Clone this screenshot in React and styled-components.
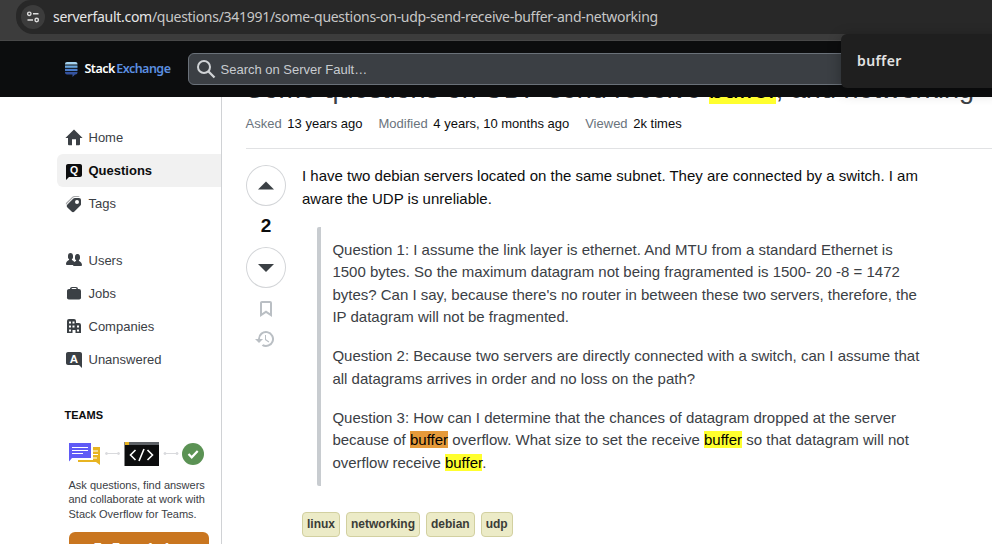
import React from "react";
import styled, { createGlobalStyle } from "styled-components";

const Global = createGlobalStyle`
  * { box-sizing: border-box; }
  html, body { margin: 0; background: #fff; overflow: hidden; }
  body { font-family: "Liberation Sans", Arial, sans-serif; font-size: 13px; color: #0c0d0e; }
  p, h1 { margin: 0; }
`;

const Page = styled.div`
  position: relative;
  width: 992px;
  height: 544px;
  overflow: hidden;
  display: flex;
  flex-direction: column;
`;

const BrowserBar = styled.div`
  flex: none;
  height: 41px;
  padding-left: 16px;
  background: #3c3c3c;
  border-bottom: 1px solid #484848;
  position: relative;
  z-index: 2;
`;

const AddressField = styled.div`
  height: 34px;
  background: #282828;
  border-radius: 15px 0 0 17px;
  display: flex;
  align-items: center;
  padding-left: 5px;
`;

const SiteInfo = styled.div`
  width: 24px;
  height: 24px;
  border-radius: 50%;
  background: #3c3c3c;
  display: grid;
  place-items: center;
`;

const Url = styled.div`
  margin-left: 8px;
  font: 14px/20px "Noto Sans", sans-serif;
  letter-spacing: -0.285px;
  color: #c7c7c7;
  white-space: nowrap;
  span { color: #e6e6e6; }
`;

const TopBar = styled.header`
  flex: none;
  height: 56px;
  background: #0c0d0e;
  display: flex;
  align-items: center;
  padding-left: 65px;
  position: relative;
  z-index: 1;
`;

const Logo = styled.div`
  width: 123px;
  display: flex;
  align-items: center;
  gap: 7px;
`;

const LogoText = styled.div`
  font: 600 12.5px/16px "Noto Sans", sans-serif;
  letter-spacing: -0.53px;
  color: #fff;
  white-space: nowrap;
  margin: -1px 0 0 -0.5px;
  span { color: #5b8fe0; margin-left: 1.5px; }
`;

const Search = styled.div`
  flex: 1;
  height: 32px;
  margin-right: -10px;
  background: #3b3f44;
  border: 1px solid #6a7179;
  border-radius: 6px;
  display: flex;
  align-items: center;
  padding-left: 7px;
  gap: 4.5px;
  color: #c8ccd0;
`;

const FindBar = styled.div`
  position: absolute;
  z-index: 3;
  left: 841px;
  top: 34px;
  width: 160px;
  height: 54px;
  padding-left: 16px;
  border-radius: 6px;
  background: #1f1f1f;
  box-shadow: 0 3px 14px rgba(0, 0, 0, 0.3);
  color: #e3e3e3;
  font: 600 14px/54px "Noto Sans", sans-serif;
  letter-spacing: 0.4px;
`;

const Columns = styled.div`
  flex: 1;
  min-height: 0;
  display: flex;
`;

const Sidebar = styled.nav`
  flex: none;
  width: 222px;
  padding: 24px 0 0 57px;
  border-right: 1px solid #d0d2d5;
`;

const NavItem = styled.div`
  height: 33px;
  padding-left: 8px;
  margin-top: ${(p) => (p.$spaced ? "24px" : "0")};
  display: flex;
  align-items: center;
  gap: 5.5px;
  border-radius: 6px 0 0 6px;
  background: ${(p) => (p.$active ? "#f1f1f1" : "transparent")};
  color: ${(p) => (p.$active ? "#0c0d0e" : "#3b4045")};
  font-weight: ${(p) => (p.$active ? 700 : 400)};
`;

const TeamsTitle = styled.div`
  margin: 32px 0 0 7.5px;
  font: 700 11px/14px "Liberation Sans", sans-serif;
`;

const TeamsArt = styled.svg`
  display: block;
  margin: 20px 0 0 12px;
`;

const TeamsText = styled.div`
  margin: 11px 0 0 11.5px;
  width: 145px;
  font-size: 11px;
  line-height: 14.4px;
  color: #3b4045;
`;

const TeamsButton = styled.div`
  margin: 11px 0 0 12px;
  width: 140px;
  height: 34px;
  border-radius: 6px;
  background: #c97620;
  color: #fff;
  text-align: center;
  font: 700 11px/31px "Liberation Sans", sans-serif;
  letter-spacing: -0.3px;
`;

const Main = styled.main`
  flex: 1;
  min-width: 0;
  padding-left: 24px;
`;

const Title = styled.h1`
  margin: -26px 0 0 -0.5px;
  height: 36px;
  font-size: 27px;
  line-height: 36px;
  font-weight: 400;
  color: #3b4045;
  white-space: nowrap;
`;

const Meta = styled.div`
  display: flex;
  gap: 16px;
  height: 42px;
  padding-top: 8px;
  line-height: 17px;
  border-bottom: 1px solid #e1e2e4;
  div:first-child { margin-left: -0.5px; }
  span { color: #6a737c; margin-right: 5.7px; }
`;

const Post = styled.div`
  display: flex;
  padding-top: 16px;
`;

const Votes = styled.div`
  flex: none;
  width: 40px;
  display: flex;
  flex-direction: column;
  align-items: center;
`;

const VoteButton = styled.div`
  width: 40px;
  height: 41px;
  border: 1px solid #d3d5d8;
  border-radius: 50%;
  display: grid;
  place-items: center;
`;

const Score = styled.div`
  height: 41px;
  font: 700 19px/39px "Liberation Sans", sans-serif;
`;

const VoteIcon = styled.div`
  display: flex;
  height: 30px;
  align-items: center;
  margin-top: ${(p) => p.$top || 0}px;
  margin-left: ${(p) => p.$left || 0}px;
`;

const Body = styled.article`
  margin-left: 16px;
  width: 632px;
  font-size: 15px;
  line-height: 22.5px;
`;

const Quote = styled.blockquote`
  margin: 16.5px 0 0 15px;
  padding: 12.2px 0 11.8px 11.4px;
  border-left: 4px solid #c8ccd0;
  border-radius: 2px;
  color: #3b4045;
  white-space: nowrap;
  p + p { margin-top: 16.5px; }
`;

const Mark = styled.mark`
  background: ${(p) => (p.$current ? "#e59a3a" : "#ffff2e")};
  color: #000;
`;

const Tags = styled.div`
  margin-top: 26px;
  display: flex;
  gap: 6px;
`;

const Tag = styled.div`
  height: 25px;
  padding: 0 4px;
  border: 1px solid #d2d0a0;
  border-radius: 4px;
  background: #ecebc7;
  color: #3b3d38;
  font: 700 12px/23px "Liberation Sans", sans-serif;
`;

const icons = {
  home: <path d="M15 9v6.200a1 1 0 0 1-1 1h-3v-6H7v6H4a1 1 0 0 1-1-1V9H.400L9 .400 17.600 9z" />,
  question: (
    <>
      <path d="m4 15-3 3V4c0-1.1.9-2 2-2h12c1.1 0 2 .9 2 2v9c0 1.1-.9 2-2 2z" />
      <text x="9" y="12" textAnchor="middle" fill="#fff" fontFamily="Liberation Sans" fontWeight="700" fontSize="10.5">Q</text>
    </>
  ),
  tags: (
    <>
      <path d="M9.24 1a3 3 0 0 0-2.12.88l-5.7 5.7a2 2 0 0 0-.38 2.31 3 3 0 0 1 .67-1.01l6-6A3 3 0 0 1 9.83 2H14a3 3 0 0 1 .79.1A2 2 0 0 0 13 1z" opacity=".45" />
      <path fillRule="evenodd" d="M9.83 3a2 2 0 0 0-1.42.59l-6 6a2 2 0 0 0 0 2.82L6.6 16.6a2 2 0 0 0 2.82 0l6-6A2 2 0 0 0 16 9.17V5a2 2 0 0 0-2-2zM12 9a2 2 0 1 1 0-4 2 2 0 0 1 0 4" />
    </>
  ),
  users: <path d="M17 14c0 .44-.45 1-1 1H9a1 1 0 0 1-1-1H2c-.54 0-1-.56-1-1 0-2.63 3-4 3-4s.23-.4 0-1c-.84-.62-1.06-.59-1-3s1.37-3 2.5-3 2.44.58 2.5 3-.16 2.38-1 3c-.23.59 0 1 0 1s1.55.71 2.42 2.09c.78-.72 1.58-1.1 1.58-1.1s.23-.4 0-1c-.84-.61-1.06-.58-1-3s1.37-3 2.5-3 2.44.59 2.5 3c.05 2.42-.16 2.39-1 3-.23.6 0 1 0 1s3 1.38 3 4" transform="translate(0 -1)" />,
  jobs: <path fillRule="evenodd" d="M5 4c0-1.1.9-2 2-2h4a2 2 0 0 1 2 2h1a2 2 0 0 1 2 2v6a2 2 0 0 1-2 2.600H4A2 2 0 0 1 2 12V6c0-1.1.9-2 2-2zm1.5 0h5a1 1 0 0 0-1-1h-3a1 1 0 0 0-1 1" />,
  companies: <path fillRule="evenodd" d="M4 1h5a2 2 0 0 1 2 2v2h3a2 2 0 0 1 2 2v8h-5.500v-3h-3v3H2V3a2 2 0 0 1 2-2m0 2.500v2h2v-2zm3.500 0v2h2v-2zM4 7.500v2h2v-2zm3.500 0v2h2v-2zm4.500 0v2h2v-2zM4 11.500v2h2v-2zm8 0v2h2v-2z" />,
  answer: (
    <>
      <path d="M14 15H3c-1.1 0-2-.9-2-2V4c0-1.1.9-2 2-2h12c1.1 0 2 .9 2 2v14z" transform="translate(0 -1)" />
      <text x="9" y="11.5" textAnchor="middle" fill="#fff" fontFamily="Liberation Sans" fontWeight="700" fontSize="11.5">A</text>
    </>
  ),
  bookmark: <path fillRule="evenodd" d="m9 10.6 4 2.660V3H5v10.260zM3 17V3c0-1.1.9-2 2-2h8a2 2 0 0 1 2 2v14l-6-4z" />,
  history: <path d="M3 9a8 8 0 1 1 3.73 6.77L8.2 14.3A6 6 0 1 0 5 9l3.01-.01-4 4-4-4zm7-4h1.01L11 9.36l3.22 2.1-.6.93L10 10z" />,
};

function Icon({ name, width = 18, color = "currentColor" }) {
  return (
    <svg width={width} height="18" viewBox={`0 0 ${width} 18`} fill={color}>
      {icons[name]}
    </svg>
  );
}

const nav = [
  { icon: "home", label: "Home" },
  { icon: "question", label: "Questions", active: true },
  { icon: "tags", label: "Tags" },
  { icon: "users", label: "Users", spaced: true },
  { icon: "jobs", label: "Jobs" },
  { icon: "companies", label: "Companies" },
  { icon: "answer", label: "Unanswered" },
];

export default function App() {
  return (
    <Page>
      <Global />
      <BrowserBar>
        <AddressField>
          <SiteInfo>
            <svg width="14" height="14" viewBox="0 0 14 14" fill="none" stroke="#dedede" strokeWidth="1.4">
              <circle cx="3.3" cy="3.8" r="1.7" />
              <path d="M7 3.800h5.500M1.500 10h5.500" />
              <circle cx="10.7" cy="10" r="1.7" />
            </svg>
          </SiteInfo>
          <Url>
            <span>serverfault.com</span>/questions/341991/some-questions-on-udp-send-receive-buffer-and-networking
          </Url>
        </AddressField>
      </BrowserBar>
      <TopBar>
        <Logo>
          <svg width="13" height="15" viewBox="0 0 13 15">
            <path d="M0 2.500V2a2 2 0 0 1 2-2h8.500a2 2 0 0 1 2 2v.500z" fill="#a5d3f0" />
            <path d="M0 3.500h12.500v2.300H0z" fill="#6aa6dc" />
            <path d="M0 6.800h12.500v2.300H0z" fill="#4a7bc8" />
            <path d="M0 10h12.500v.500a2 2 0 0 1-2 2H10L7.500 15v-2.500H2a2 2 0 0 1-2-2z" fill="#35539f" />
          </svg>
          <LogoText>Stack<span>Exchange</span></LogoText>
        </Logo>
        <Search>
          <svg width="20" height="20" viewBox="0 0 20 20" fill="none" stroke="#d0d3d6" strokeWidth="2">
            <circle cx="8" cy="8" r="6" />
            <path d="m12.500 12.500 6 6" strokeWidth="2.300" />
          </svg>
          Search on Server Fault…
        </Search>
      </TopBar>
      <FindBar>buffer</FindBar>
      <Columns>
        <Sidebar>
          {nav.map((n) => (
            <NavItem key={n.label} $active={n.active} $spaced={n.spaced}>
              <Icon name={n.icon} />
              {n.label}
            </NavItem>
          ))}
          <TeamsTitle>TEAMS</TeamsTitle>
          <TeamsArt width="136" height="25" viewBox="0 0 136 25">
            <path d="M24 5h7v18l-4-3H9v-2h15z" fill="#e8b421" />
            <path d="M23 9h6M23 12.500h6M23 16h5" stroke="#fff" strokeWidth="1.200" />
            <path d="M0 1h22v15H3l-3 3.500z" fill="#5f5af6" />
            <path d="M3 5.500h16M3 8.500h16M3 11.500h11" stroke="#fff" strokeWidth="1" />
            <g stroke="#d9dadd" fill="#d9dadd">
              <path d="M37 11.500h12M96 11.500h12" />
              <circle cx="37.5" cy="11.5" r="1" /><circle cx="49.5" cy="11.5" r="1" />
              <circle cx="96" cy="11.5" r="1" /><circle cx="108" cy="11.5" r="1" />
            </g>
            <path d="M55.500 0H90v24H55.500z" fill="#0c0d0e" />
            <path d="M60 0h30v3H60z" fill="#5e6267" />
            <path d="M56 0h4v3h-4z" fill="#e8b421" />
            <path d="m66.500 8-5 5 5 5M78.500 8l5 5-5 5M75 7l-5 12" fill="none" stroke="#fff" strokeWidth="1.600" />
            <circle cx="124" cy="12" r="11" fill="#5b9254" />
            <path d="m119.500 12 3.200 3.300 6-6.300" fill="none" stroke="#fff" strokeWidth="2.200" />
          </TeamsArt>
          <TeamsText>Ask questions, find answers and collaborate at work with Stack Overflow for Teams.</TeamsText>
          <TeamsButton>Try Teams for free</TeamsButton>
        </Sidebar>
        <Main>
          <Title>
            Some questions on UDP send receive <Mark>buffer</Mark>, and networking
          </Title>
          <Meta>
            <div><span>Asked</span>13 years ago</div>
            <div><span>Modified</span>4 years, 10 months ago</div>
            <div><span>Viewed</span>2k times</div>
          </Meta>
          <Post>
            <Votes>
              <VoteButton>
                <svg width="18" height="18" viewBox="0 0 18 18" fill="#3b4045"><path d="M1 12.500h16L9 4.500z" /></svg>
              </VoteButton>
              <Score>2</Score>
              <VoteButton>
                <svg width="18" height="18" viewBox="0 0 18 18" fill="#3b4045"><path d="M1 5h16l-8 8z" /></svg>
              </VoteButton>
              <VoteIcon $top={6}><Icon name="bookmark" color="#babfc4" /></VoteIcon>
              <VoteIcon $left={-3}><Icon name="history" width={19} color="#babfc4" /></VoteIcon>
            </Votes>
            <Body>
              <p>
                I have two debian servers located on the same subnet. They are connected by a switch. I am
                aware the UDP is unreliable.
              </p>
              <Quote>
                <p>
                  Question 1: I assume the link layer is ethernet. And MTU from a standard Ethernet is<br />
                  1500 bytes. So the maximum datagram not being fragramented is 1500- 20 -8 = 1472<br />
                  bytes? Can I say, because there's no router in between these two servers, therefore, the<br />
                  IP datagram will not be fragmented.
                </p>
                <p>
                  Question 2: Because two servers are directly connected with a switch, can I assume that<br />
                  all datagrams arrives in order and no loss on the path?
                </p>
                <p>
                  Question 3: How can I determine that the chances of datagram dropped at the server<br />
                  because of <Mark $current>buffer</Mark> overflow. What size to set the receive <Mark>buffer</Mark> so that datagram will not<br />
                  overflow receive <Mark>buffer</Mark>.
                </p>
              </Quote>
              <Tags>
                {["linux", "networking", "debian", "udp"].map((t) => <Tag key={t}>{t}</Tag>)}
              </Tags>
            </Body>
          </Post>
        </Main>
      </Columns>
    </Page>
  );
}
